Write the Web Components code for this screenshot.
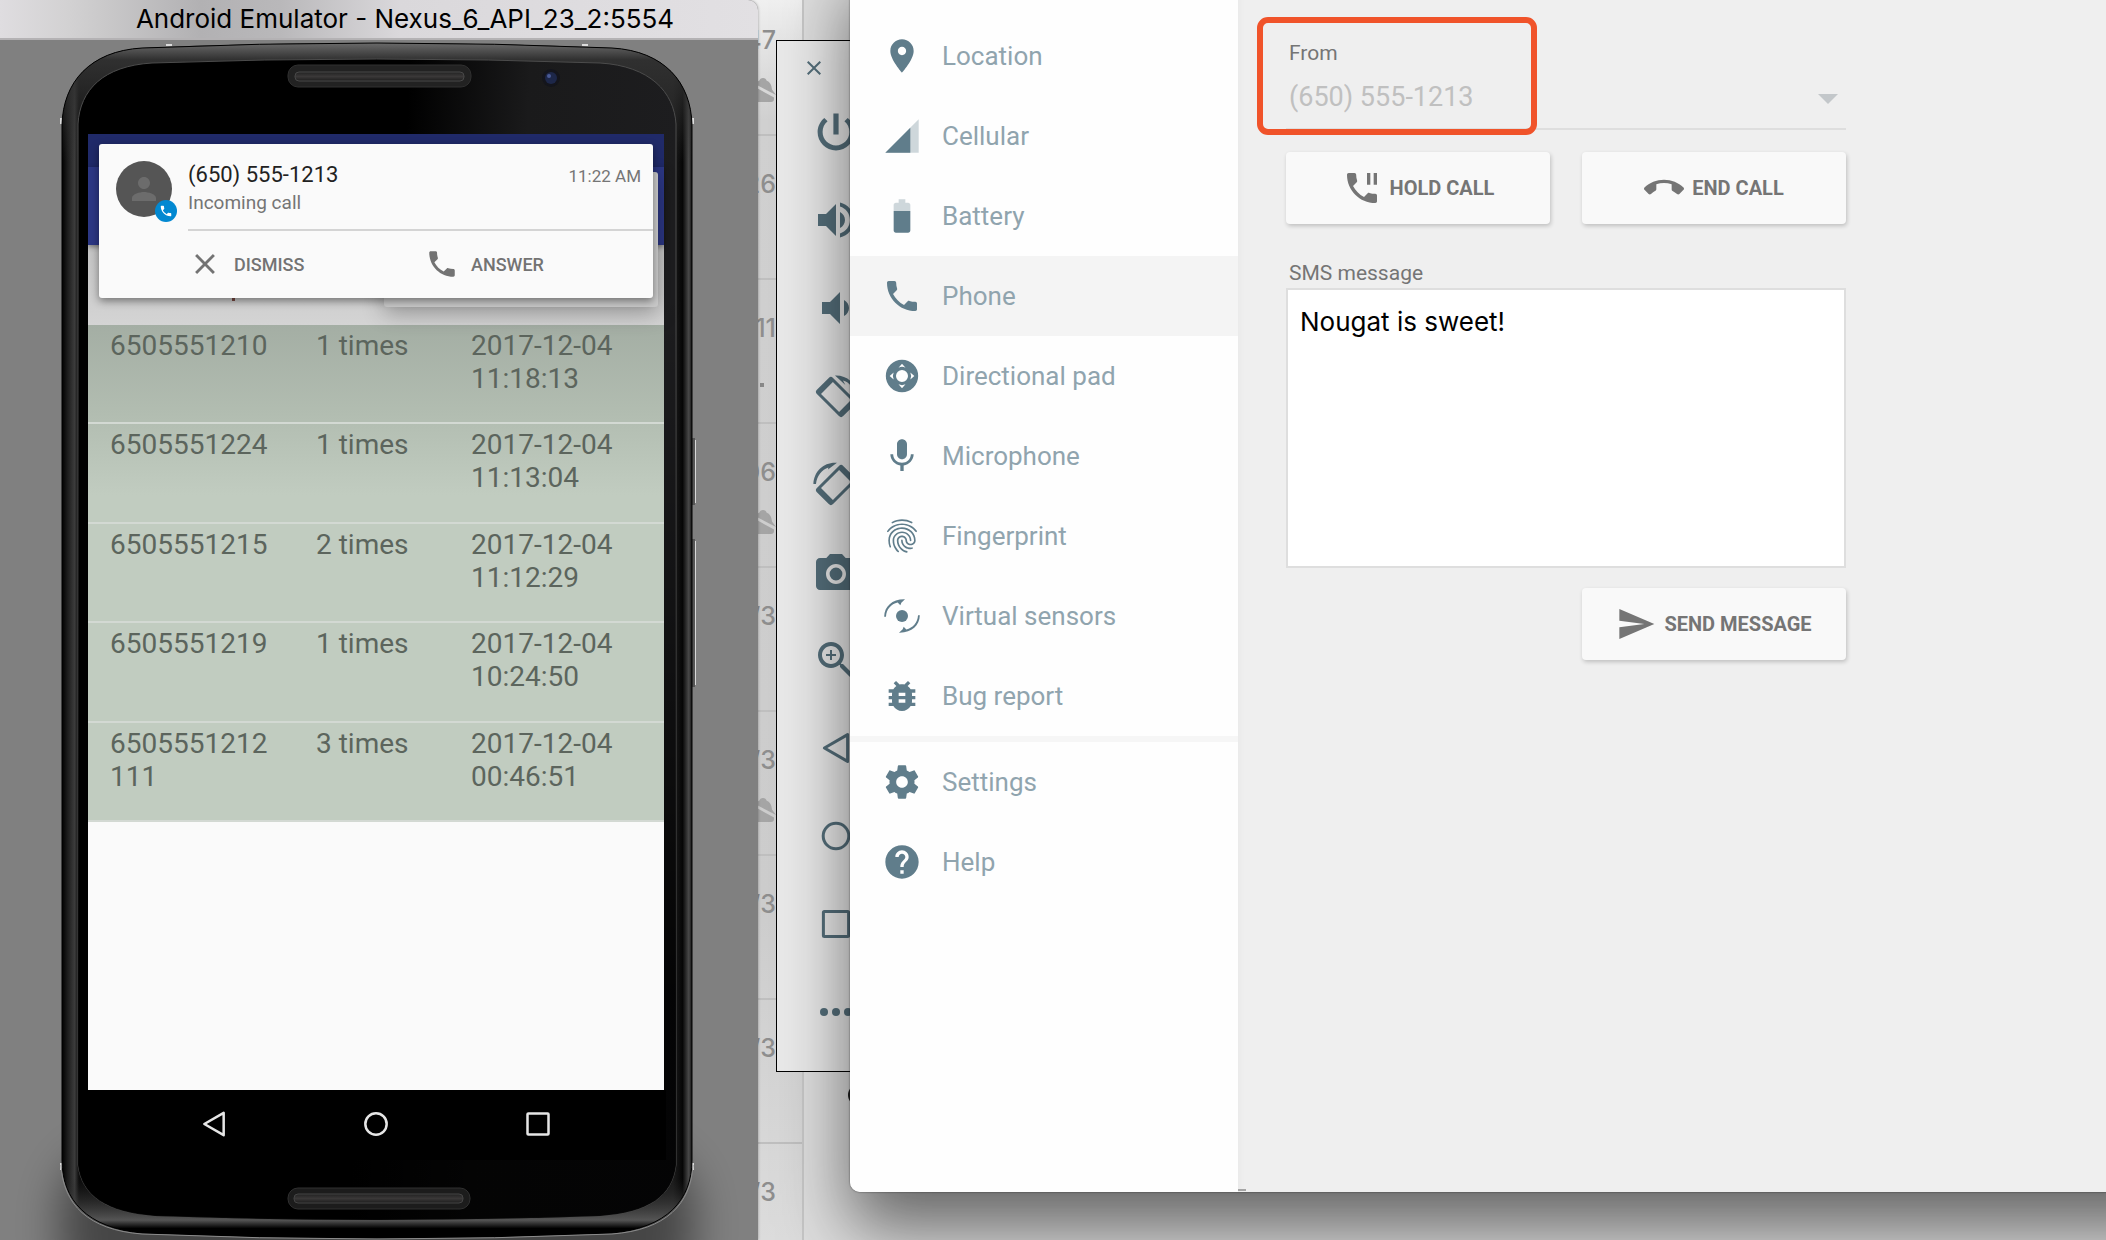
<!DOCTYPE html>
<html lang="en">
<head>
<meta charset="utf-8">
<title>Android Emulator</title>
<style>
html,body{margin:0;height:100%;overflow:hidden}
body{font-family:Roboto,"Noto Sans",sans-serif;background:#dadada}
</style>
</head>
<body>
<desktop-scene></desktop-scene>
<script>
const PHONE='<path d="M6.62 10.79c1.44 2.83 3.76 5.14 6.59 6.59l2.2-2.2c.27-.27.67-.36 1.02-.24 1.12.37 2.33.57 3.57.57.55 0 1 .45 1 1V20c0 .55-.45 1-1 1-9.39 0-17-7.61-17-17 0-.55.45-1 1-1h3.5c.55 0 1 .45 1 1 0 1.25.2 2.45.57 3.57.11.35.03.74-.25 1.02l-2.2 2.2z"/>';
const ICONS={
location:'<path d="M12 2C8.13 2 5 5.13 5 9c0 5.25 7 13 7 13s7-7.75 7-13c0-3.87-3.13-7-7-7zm0 9.5c-1.38 0-2.5-1.12-2.5-2.5s1.12-2.5 2.5-2.5 2.5 1.12 2.5 2.5-1.12 2.5-2.5 2.5z"/>',
cellular:'<path fill-opacity=".3" d="M2 22h20V2z"/><path d="M17 7L2 22h15z"/>',
battery:'<path fill-opacity=".3" d="M17 5.33C17 4.6 16.4 4 15.67 4H14V2h-4v2H8.33C7.6 4 7 4.6 7 5.33V9h10V5.33z"/><path d="M7 9v11.67C7 21.4 7.6 22 8.33 22h7.33c.74 0 1.34-.6 1.34-1.33V9H7z"/>',
phone:PHONE,
hold:PHONE+'<path d="M15 3h2v7h-2zM19 3h2v7h-2z"/>',
dpad:'<path fill-rule="evenodd" d="M12 2.3a9.7 9.7 0 1 0 0 19.4 9.7 9.7 0 0 0 0-19.4zM12 8.4a3.6 3.6 0 1 1 0 7.2 3.6 3.6 0 0 1 0-7.2zM12 4.6l2.1 2.4q-2.1-1-4.2 0zM12 19.4l2.1-2.4q-2.1 1-4.2 0zM4.6 12l2.4-2.1q-1 2.1 0 4.2zM19.4 12l-2.4-2.1q1 2.1 0 4.2z"/>',
mic:'<path d="M12 14c1.66 0 2.99-1.34 2.99-3L15 5c0-1.66-1.34-3-3-3S9 3.34 9 5v6c0 1.66 1.34 3 3 3zm5.3-3c0 3-2.54 5.1-5.3 5.1S6.7 14 6.7 11H5c0 3.41 2.72 6.23 6 6.72V21h2v-3.28c3.28-.48 6-3.3 6-6.72h-1.7z"/>',
fingerprint:'<path d="M17.81 4.47c-.08 0-.16-.02-.23-.06C15.66 3.42 14 3 12.01 3c-1.98 0-3.86.47-5.57 1.41-.24.13-.54.04-.68-.2-.13-.24-.04-.55.2-.68C7.82 2.52 9.86 2 12.01 2c2.13 0 3.99.47 6.03 1.52.25.13.34.43.21.67-.09.18-.26.28-.44.28zM3.5 9.72c-.1 0-.2-.03-.29-.09-.23-.16-.28-.47-.12-.7.99-1.4 2.25-2.5 3.75-3.27C9.98 4.04 14 4.03 17.15 5.65c1.5.77 2.76 1.86 3.75 3.25.16.22.11.54-.12.7-.23.16-.54.11-.7-.12-.9-1.26-2.04-2.25-3.39-2.94-2.87-1.47-6.54-1.47-9.4.01-1.36.7-2.5 1.7-3.4 2.96-.08.14-.23.21-.39.21zm6.25 12.07c-.13 0-.26-.05-.35-.15-.87-.87-1.34-1.43-2.01-2.64-.69-1.23-1.05-2.73-1.05-4.34 0-2.97 2.54-5.39 5.66-5.39s5.66 2.42 5.66 5.39c0 .28-.22.5-.5.5s-.5-.22-.5-.5c0-2.42-2.09-4.39-4.66-4.39-2.57 0-4.66 1.97-4.66 4.39 0 1.44.32 2.77.93 3.85.64 1.15 1.08 1.64 1.85 2.42.19.2.19.51 0 .71-.11.1-.24.15-.37.15zm7.17-1.85c-1.19 0-2.24-.3-3.1-.89-1.49-1.01-2.38-2.65-2.38-4.39 0-.28.22-.5.5-.5s.5.22.5.5c0 1.41.72 2.74 1.94 3.56.71.48 1.54.71 2.54.71.24 0 .64-.03 1.04-.1.27-.05.53.13.58.41.05.27-.13.53-.41.58-.57.11-1.07.12-1.21.12zM14.91 22c-.04 0-.09-.01-.13-.02-1.59-.44-2.63-1.03-3.72-2.1-1.4-1.39-2.17-3.24-2.17-5.22 0-1.62 1.38-2.94 3.08-2.94 1.7 0 3.08 1.32 3.08 2.94 0 1.07.93 1.94 2.08 1.94s2.08-.87 2.08-1.94c0-3.77-3.25-6.83-7.25-6.83-2.84 0-5.44 1.58-6.61 4.03-.39.81-.59 1.76-.59 2.8 0 .78.07 2.01.67 3.61.1.26-.03.55-.29.64-.26.1-.55-.04-.64-.29-.49-1.31-.73-2.61-.73-3.96 0-1.2.23-2.29.68-3.24 1.33-2.79 4.28-4.6 7.51-4.6 4.55 0 8.25 3.51 8.25 7.83 0 1.62-1.38 2.94-3.08 2.94s-3.08-1.32-3.08-2.94c0-1.07-.93-1.94-2.08-1.94s-2.08.87-2.08 1.94c0 1.71.66 3.31 1.87 4.51.95.94 1.86 1.46 3.27 1.85.27.07.42.35.35.61-.05.23-.26.38-.47.38z"/>',
sensors:'<circle cx="12" cy="12" r="3.6"/><path d="M1.3 12.4C1.5 6.2 6.2 1.8 13.8 2L11.6 4.1 11 5.6 9.4 3.9C5.4 4.8 2.6 8 2.4 12.4zM22.7 11.6C22.5 17.8 17.8 22.2 10.2 22L12.4 19.9 13 18.4 14.6 20.1C18.6 19.2 21.4 16 21.6 11.6z"/>',
bug:'<path d="M20 8h-2.81c-.45-.78-1.07-1.45-1.82-1.96L17 4.41 15.59 3l-2.17 2.17C12.96 5.06 12.49 5 12 5c-.49 0-.96.06-1.41.17L8.41 3 7 4.41l1.62 1.63C7.88 6.55 7.26 7.22 6.81 8H4v2h2.09c-.05.33-.09.66-.09 1v1H4v2h2v1c0 .34.04.67.09 1H4v2h2.81c1.04 1.79 2.97 3 5.19 3s4.15-1.21 5.19-3H20v-2h-2.09c.05-.33.09-.66.09-1v-1h2v-2h-2v-1c0-.34-.04-.67-.09-1H20V8zm-6 8h-4v-2h4v2zm0-4h-4v-2h4v2z"/>',
settings:'<path d="M19.43 12.98c.04-.32.07-.64.07-.98s-.03-.66-.07-.98l2.11-1.65c.19-.15.24-.42.12-.64l-2-3.46c-.12-.22-.39-.3-.61-.22l-2.49 1c-.52-.4-1.08-.73-1.69-.98l-.38-2.65C14.46 2.18 14.25 2 14 2h-4c-.25 0-.46.18-.49.42l-.38 2.65c-.61.25-1.17.59-1.69.98l-2.49-1c-.23-.09-.49 0-.61.22l-2 3.46c-.13.22-.07.49.12.64l2.11 1.65c-.04.32-.07.65-.07.98s.03.66.07.98l-2.11 1.65c-.19.15-.24.42-.12.64l2 3.46c.12.22.39.3.61.22l2.49-1c.52.4 1.08.73 1.69.98l.38 2.65c.03.24.24.42.49.42h4c.25 0 .46-.18.49-.42l.38-2.65c.61-.25 1.17-.59 1.69-.98l2.49 1c.23.09.49 0 .61-.22l2-3.46c.12-.22.07-.49-.12-.64l-2.11-1.65zM12 15.5c-1.93 0-3.5-1.57-3.5-3.5s1.57-3.5 3.5-3.5 3.5 1.57 3.5 3.5-1.57 3.5-3.5 3.5z"/>',
help:'<path d="M12 2C6.48 2 2 6.48 2 12s4.48 10 10 10 10-4.48 10-10S17.52 2 12 2zm1 17h-2v-2h2v2zm2.07-7.75l-.9.92C13.45 12.9 13 13.5 13 15h-2v-.5c0-1.1.45-2.1 1.17-2.83l1.24-1.26c.37-.36.59-.86.59-1.41 0-1.1-.9-2-2-2s-2 .9-2 2H8c0-2.21 1.79-4 4-4s4 1.79 4 4c0 .88-.36 1.68-.93 2.25z"/>',
end:'<path d="M12 9c-1.6 0-3.15.25-4.6.72v3.1c0 .39-.23.74-.56.9-.98.49-1.87 1.12-2.66 1.85-.18.18-.43.28-.7.28-.28 0-.53-.11-.71-.29L.29 13.08c-.18-.17-.29-.42-.29-.7 0-.28.11-.53.29-.71C3.34 8.78 7.46 7 12 7s8.66 1.78 11.71 4.67c.18.18.29.43.29.71 0 .28-.11.53-.29.71l-2.48 2.48c-.18.18-.43.29-.71.29-.27 0-.52-.11-.7-.28-.79-.74-1.69-1.36-2.67-1.85-.33-.16-.56-.5-.56-.9v-3.1C15.15 9.25 13.6 9 12 9z"/>',
send:'<path d="M2.01 21L23 12 2.01 3 2 10l15 2-15 2z"/>',
close:'<path d="M19 6.41L17.59 5 12 10.59 6.41 5 5 6.41 10.59 12 5 17.59 6.41 19 12 13.41 17.59 19 19 17.59 13.41 12z"/>',
power:'<path d="M13.3 2.8h-2.6v10.4h2.6zM17.83 4.97l-1.62 1.62C17.89 7.86 18.7 9.81 18.7 12c0 3.7-3 6.7-6.7 6.7S5.3 15.7 5.3 12c0-2.19.81-4.14 2.48-5.42L6.17 4.97C4.13 6.62 2.8 9.26 2.8 12c0 5.08 4.12 9.2 9.2 9.2s9.2-4.12 9.2-9.2c0-2.74-1.33-5.38-3.37-7.03z"/>',
volup:'<path d="M3 9v6h4l5 5V4L7 9H3zm13.5 3c0-1.77-1.02-3.29-2.5-4.03v8.05c1.48-.73 2.5-2.25 2.5-4.02zM14 3.23v2.06c2.89.86 5 3.54 5 6.71s-2.11 5.85-5 6.71v2.06c4.01-.91 7-4.49 7-8.77s-2.99-7.86-7-8.77z"/>',
voldown:'<path d="M18.5 12c0-1.77-1.02-3.29-2.5-4.03v8.05c1.48-.73 2.5-2.25 2.5-4.02zM5 9v6h4l5 5V4L9 9H5z"/>',
rotleft:'<g transform="rotate(45 12 12.5)"><path fill-rule="evenodd" d="M4.2 6.8h15.6q1.5 0 1.5 1.5v8.4q0 1.5-1.5 1.5H4.2q-1.5 0-1.5-1.5V8.3q0-1.5 1.5-1.5zM5.6 8.3v8.4h12.8V8.3z"/></g><path d="M11.5 1.7C17.5 1.5 22 5.5 22.8 11.5h-1.4C20.7 7.5 18.5 5 15.5 4.2l1.2 2.3z"/>',
rotright:'<g transform="rotate(-45 12 12.5)"><path fill-rule="evenodd" d="M4.2 6.8h15.6q1.5 0 1.5 1.5v8.4q0 1.5-1.5 1.5H4.2q-1.5 0-1.5-1.5V8.3q0-1.5 1.5-1.5zM5.6 8.3v8.4h12.8V8.3z"/></g><path d="M12.5 1.4C6 .9 1 5.5.7 12h1.3C2.4 7.8 5 4.800 8.200 3.700L8 4.800z"/>',
camera:'<path d="M9 3L7.17 5H4c-1.1 0-2 .9-2 2v12c0 1.1.9 2 2 2h16c1.1 0 2-.9 2-2V7c0-1.1-.9-2-2-2h-3.17L15 3H9zm3 15c-2.76 0-5-2.24-5-5s2.24-5 5-5 5 2.24 5 5-2.24 5-5 5zM12 9.8a3.2 3.2 0 1 0 0 6.4 3.2 3.2 0 0 0 0-6.4z"/>',
zoom:'<path d="M15.5 14h-.79l-.28-.27C15.41 12.59 16 11.11 16 9.5 16 5.91 13.09 3 9.5 3S3 5.91 3 9.5 5.91 16 9.5 16c1.61 0 3.09-.59 4.23-1.57l.27.28v.79l5 4.99L20.49 19l-4.99-5zm-6 0C7.01 14 5 11.99 5 9.5S7.01 5 9.5 5 14 7.01 14 9.5 11.99 14 9.5 14zm.5-7H9v2H7v1h2v2h1v-2h2V9h-2z"/>',
back:'<path d="M6.2 12l11.6-6.7v13.4z" fill="none" stroke="currentColor" stroke-width="1.5" stroke-linejoin="round"/>',
home:'<circle cx="12" cy="12" r="6.4" fill="none" stroke="currentColor" stroke-width="1.5"/>',
recent:'<rect x="5.7" y="5.7" width="12.6" height="12.6" rx=".5" fill="none" stroke="currentColor" stroke-width="1.5"/>',
more:'<circle cx="6" cy="12" r="2"/><circle cx="12" cy="12" r="2"/><circle cx="18" cy="12" r="2"/>',
person:'<path d="M12 12c2.21 0 4-1.79 4-4s-1.79-4-4-4-4 1.79-4 4 1.79 4 4 4zm0 2c-2.67 0-8 1.34-8 4v2h16v-2c0-2.66-5.33-4-8-4z"/>',
bell:'<path d="M11 0q3 0 3.5 2.500q5 2 5.500 9l4 5.500L3 6q2-3 4.500-3.500Q8 0 11 0zM2 8.500l20 11v1.500q0 3-3 3H2z"/>'
};
function define(tag,markup){
  customElements.define(tag,class extends HTMLElement{
    constructor(){super();this.attachShadow({mode:'open'})}
    connectedCallback(){this.shadowRoot.innerHTML=typeof markup==='function'?markup(this):markup}
  });
}
define('ui-icon',el=>{const s=el.getAttribute('size')||40;return `<style>:host{display:block;flex:none;width:${s}px;height:${s}px}svg{display:block;width:100%;height:100%}</style><svg viewBox="0 0 24 24" fill="currentColor" aria-hidden="true">${ICONS[el.getAttribute('name')]}</svg>`});

/* Calendar behind the windows */
define('calendar-strip',()=>{
  const rows=[['47',1],['26'],['11',2],['06',1],['/3'],['/3',1],['/3'],['/3'],['/3']];
  return `<style>
  :host{display:flex;flex-direction:column;box-sizing:border-box;width:804px;border-right:2px solid #c6c6c6;font:500 25px/24px Inter,sans-serif;color:#8e8e8e;overflow:hidden;background:linear-gradient(#f0f0f0,#d0d0d0 120px,#cccccc 900px,#dcdcdc)}
  div{box-sizing:border-box;height:144px;flex:none;border-bottom:2px solid #bfbfbf;padding:36px 26px 0 0;display:flex;flex-direction:column;align-items:flex-end}
  div:first-of-type{height:136px;padding-top:28px}
  ui-icon{margin-top:26px;color:#a5a5a5}
  i{width:4px;height:4px;background:#888;margin:43px 12px 0}
  </style>`+rows.map(r=>`<div>${r[0]}${r[1]===1?'<ui-icon name="bell" size="24"></ui-icon>':r[1]===2?'<i></i>':''}</div>`).join('')});

define('call-notification',`<style>
:host{display:grid;grid-template-columns:89px 1fr;background:#fafafa;border-radius:3px;box-shadow:0 3px 8px rgba(0,0,0,.45);height:154px}
.av{position:relative;width:56px;height:56px;border-radius:50%;background:#555;color:#6c6c6c;display:flex;align-items:center;justify-content:center;margin:17px 0 0 17px}
.badge{position:absolute;left:39px;top:39px;width:22px;height:22px;border-radius:50%;background:#0288d1;color:#fff;display:flex;align-items:center;justify-content:center}
.body{display:flex;flex-direction:column}
.top{display:flex;justify-content:space-between;align-items:baseline;padding:17px 12px 0 0;line-height:28px;font-size:22px;color:#212121}
time{font-size:17px;color:#757575}
.sub{font-size:19px;line-height:24px;color:#757575;height:39px;padding-top:1px;box-sizing:border-box}
.acts{border-top:2px solid #d4d4d4;display:grid;grid-template-columns:237px 1fr;height:69px}
button{all:unset;display:flex;align-items:center;gap:12px;padding-bottom:3px;font-size:18px;font-weight:500;color:#737373;cursor:pointer}
</style><div class="av"><ui-icon name="person" size="36"></ui-icon><span class="badge"><ui-icon name="phone" size="14"></ui-icon></span></div>
<div class="body"><div class="top"><span>(650) 555-1213</span><time>11:22 AM</time></div><div class="sub">Incoming call</div>
<div class="acts"><button><ui-icon name="close" size="34"></ui-icon>DISMISS</button><button><ui-icon name="phone" size="34"></ui-icon>ANSWER</button></div></div>`);

define('call-log',()=>{
  const rows=[['6505551210','1','2017-12-04 11:18:13'],['6505551224','1','2017-12-04 11:13:04'],['6505551215','2','2017-12-04 11:12:29'],['6505551219','1','2017-12-04 10:24:50'],['6505551212111','3','2017-12-04 00:46:51']];
  return `<style>
  :host{display:block}
  table{width:100%;height:497px;table-layout:fixed;border-collapse:separate;border-spacing:0;font-size:28px;line-height:33px;color:#5c655d;background:linear-gradient(#a4aea4,#b2bdb1 90px,#c1ccc0 170px)}
  td{vertical-align:top;padding:4px 20px 0 0;border-bottom:2px solid #d3d9d3}
  td:first-child{width:170px;padding:4px 36px 0 22px;word-break:break-all}
  td:nth-child(2){width:135px}
  </style><table>${rows.map(r=>`<tr><td>${r[0]}</td><td>${r[1]} times</td><td>${r[2]}</td></tr>`).join('')}</table>`});

define('phone-screen',`<style>
:host{display:flex;flex-direction:column;position:relative;background:#fafafa;height:956px}
.status{height:33px;background:#202a69}
.appbar{height:78px;background:#2c3784;box-shadow:0 2px 5px rgba(0,0,0,.4);z-index:1}
.head{height:80px;background:linear-gradient(#c4c4c4,#d4d4d4)}
.toast{position:absolute;z-index:2;left:296px;top:38px;width:274px;height:135px;background:#c9c9c9;border-radius:3px;box-shadow:0 6px 22px rgba(0,0,0,.3)}
.mark{position:absolute;z-index:2;left:144px;top:158px;width:3px;height:9px;background:#7b4a42}
call-notification{position:absolute;z-index:3;left:11px;top:10px;width:554px}
</style><div class="status"></div><div class="appbar"></div><div class="head"></div><call-log></call-log>
<div class="toast"></div><div class="mark"></div><call-notification></call-notification>`);

define('phone-body',`<style>
:host{display:block;position:relative;flex:1;background:#808080;overflow:hidden}
.art{position:absolute;left:0;top:0}
.in{position:relative;margin:94px 94px 0 88px}
nav{display:flex;justify-content:space-between;padding:14px 106px 0 106px;color:#e6e6e6}
button{all:unset;display:block}
</style>
<svg class="art" width="758" height="1200" viewBox="0 40 758 1200" aria-hidden="true">
<defs>
<linearGradient id="b" x1="0" y1="0" x2="1" y2="0"><stop offset="0" stop-color="#000"/><stop offset=".008" stop-color="#1a1a1a"/><stop offset=".02" stop-color="#3c3c3c"/><stop offset=".027" stop-color="#0c0c0c"/><stop offset=".97" stop-color="#1c1c1c"/><stop offset=".985" stop-color="#060606"/><stop offset=".995" stop-color="#4a4a4a"/><stop offset="1" stop-color="#111"/></linearGradient>
<linearGradient id="t" x1="0" y1="0" x2="0" y2="1"><stop offset="0" stop-color="#6a6a6a"/><stop offset=".014" stop-color="#303030"/><stop offset=".1" stop-color="#303030" stop-opacity="0"/><stop offset=".95" stop-color="#222" stop-opacity="0"/><stop offset=".985" stop-color="#555"/><stop offset=".992" stop-color="#000"/></linearGradient>
<linearGradient id="f" x1="0" y1="0" x2="1" y2=".1"><stop offset="0" stop-color="#000"/><stop offset=".55" stop-color="#000"/><stop offset=".75" stop-color="#1a1a1b"/><stop offset="1" stop-color="#1d1d1f"/></linearGradient>
<linearGradient id="fb" x1="0" y1="0" x2="0" y2="1"><stop offset=".2" stop-color="#000" stop-opacity="0"/><stop offset=".8" stop-color="#000" stop-opacity=".85"/></linearGradient>
<linearGradient id="s" x1="0" y1="0" x2="0" y2="1"><stop offset="0" stop-color="#222"/><stop offset=".5" stop-color="#3a3838"/><stop offset="1" stop-color="#1d1d1d"/></linearGradient>
<filter id="bl" x="-30%" y="-30%" width="160%" height="160%"><feGaussianBlur stdDeviation="22"/></filter>
</defs>
<rect x="60" y="1150" width="634" height="150" rx="60" fill="#000" opacity=".45" filter="url(#bl)"/>
<path d="M166 45h6M582 45h6M61 118v6M693 118v6M61 1163v7M693 1163v7" stroke="#ddd" stroke-width="2"/>
<path d="M695 440v63M695 541v144" stroke="#d8d8d8" stroke-width="2" fill="none"/><path d="M692 438h3v67h-3zM692 539h3v148h-3z" fill="#555"/>
<path d="M62 125C63 82 90 51 142 48Q377 38 612 48C664 51 691 82 692 125V1160C692 1200 667 1228 612 1233Q377 1243 142 1233C87 1228 62 1200 62 1160z" fill="url(#b)"/>
<path d="M62 125C63 82 90 51 142 48Q377 38 612 48C664 51 691 82 692 125V1160C692 1200 667 1228 612 1233Q377 1243 142 1233C87 1228 62 1200 62 1160z" fill="url(#t)" stroke="#000" stroke-width="1"/>
<path d="M61 1165C63 1204 88 1230 142 1234Q377 1244 612 1234C666 1230 691 1204 693 1165" fill="none" stroke="#8c8c8c" stroke-width="1"/>
<path d="M78 124C80 90 103 66 152 63Q377 55 600 63C650 66 674 92 676 124V1165C672 1196 650 1212 600 1216Q377 1224 155 1216C106 1212 82 1196 78 1165z" fill="url(#f)" stroke="#4c4c4c" stroke-width="1"/>
<path d="M78 124C80 90 103 66 152 63Q377 55 600 63C650 66 674 92 676 124V1165C672 1196 650 1212 600 1216Q377 1224 155 1216C106 1212 82 1196 78 1165z" fill="url(#fb)"/>
<rect x="88" y="1090" width="578" height="70" fill="#000"/>
<rect x="288" y="65" width="183" height="22" rx="10" fill="#222" stroke="#303030"/><rect x="295" y="72" width="169" height="9" rx="4" fill="url(#s)" stroke="#484848"/>
<rect x="288" y="1188" width="182" height="21" rx="10" fill="#1c1c1c" stroke="#303030"/><rect x="294" y="1194" width="169" height="9" rx="4" fill="url(#s)" stroke="#444"/>
<circle cx="551" cy="78" r="9" fill="#14151c"/><circle cx="551" cy="78" r="6" fill="#1d2749"/><circle cx="549" cy="76" r="2" fill="#4a5a96"/>
</svg>
<div class="in"><phone-screen></phone-screen><nav><button aria-label="Back"><ui-icon name="back" size="40"></ui-icon></button><button aria-label="Home"><ui-icon name="home" size="40"></ui-icon></button><button aria-label="Overview"><ui-icon name="recent" size="40"></ui-icon></button></nav></div>`);

define('emulator-window',`<style>
:host{display:flex;flex-direction:column;background:#808080;border-radius:0 10px 0 0;overflow:hidden;box-shadow:0 0 3px rgba(0,0,0,.35)}
header{height:38px;border-bottom:2px solid #b4b2b4;font:26px/38px Inter,sans-serif;color:#000;text-align:center;padding-left:52px;white-space:nowrap;background:linear-gradient(90deg,#dfdde0,#d2d1d2 70px,#b2b1b3 200px,#b9b8ba 280px,#dad8db 400px,#e2e0e3)}
</style><header>Android Emulator - Nexus_6_API_23_2:5554</header><phone-body></phone-body>`);

define('emulator-toolbar',()=>{
  const n=[['power','Power'],['volup','Volume up'],['voldown','Volume down'],['rotleft','Rotate left'],['rotright','Rotate right'],['camera','Screenshot'],['zoom','Zoom'],['back','Back'],['home','Home'],['recent','Overview'],['more','More']];
  return `<style>
  :host{display:flex;flex-direction:column;box-sizing:border-box;border:1px solid #000;background:#e9e9e9;color:#546e7a;padding-left:35px}
  button{all:unset;display:block}
  .x{margin:15px 0 15px -10px}
  .t{height:48px;margin:13px 0 27px}
  </style><button class="x" aria-label="Close"><ui-icon name="close" size="24"></ui-icon></button>`+n.map(i=>`<button class="t" aria-label="${i[1]}"><ui-icon name="${i[0]}" size="48"></ui-icon></button>`).join('')});

define('menu-item',el=>`<style>
:host{display:block}
a{display:flex;align-items:center;gap:20px;height:80px;padding-left:32px;color:#90a4ae;font-size:26px;line-height:32px;text-decoration:none}
:host([selected]) a{background:#f4f4f4}
ui-icon{color:#607d8b}
</style><a href="#"><ui-icon name="${el.getAttribute('icon')}"></ui-icon><slot></slot></a>`);

define('side-menu',`<style>
:host{display:block;width:388px;flex:none;background:#fefefe;padding-top:56px}
hr{margin:0;border:0;height:6px;background:#f6f6f6}
</style>
<menu-item icon="location">Location</menu-item><menu-item icon="cellular">Cellular</menu-item><menu-item icon="battery">Battery</menu-item><menu-item icon="phone" selected>Phone</menu-item><menu-item icon="dpad">Directional pad</menu-item><menu-item icon="mic">Microphone</menu-item><menu-item icon="fingerprint">Fingerprint</menu-item><menu-item icon="sensors">Virtual sensors</menu-item><menu-item icon="bug">Bug report</menu-item><hr><menu-item icon="settings">Settings</menu-item><menu-item icon="help">Help</menu-item>`);

define('raised-button',el=>`<style>
:host{display:block;width:264px}
button{all:unset;box-sizing:border-box;width:100%;height:72px;display:flex;align-items:center;justify-content:center;gap:8px;background:#f9f9f9;border-radius:4px;box-shadow:1px 2px 4px rgba(0,0,0,.2);font-size:20px;font-weight:700;color:#757575;cursor:pointer}
</style><button><ui-icon name="${el.getAttribute('icon')}"></ui-icon><slot></slot></button>`);

define('phone-panel',`<style>
:host{display:block;flex:1;background:#efefef;box-shadow:inset 10px 0 10px -10px rgba(0,0,0,.04);padding:81px 48px 0;position:relative}
form{max-width:560px;display:flex;flex-direction:column}
label{font-size:21px;line-height:24px;color:#757575;padding-left:3px}
.sel{position:relative;margin-bottom:22px}
.sel::after{content:"";position:absolute;right:8px;top:29px;border:10px solid transparent;border-top-color:#c3c7ca;border-bottom:0}
select{appearance:none;display:block;width:100%;height:65px;border:0;border-bottom:2px solid #dedede;background:none;font:27px/32px Roboto,sans-serif;color:#c0c0c0;padding:0 0 0 3px;margin:0;opacity:1;border-radius:0}
.row{display:flex;justify-content:space-between;margin-bottom:37px}
textarea{display:block;box-sizing:border-box;width:100%;height:280px;margin:3px 0 20px;border:2px solid #dedede;background:#fff;padding:16px 12px;font:26px/32px Inter,sans-serif;color:#000;resize:none;border-radius:0;outline:0}
.send{align-self:flex-end}
.hl{position:absolute;left:19px;top:57px;width:280px;height:118px;box-sizing:border-box;border:6px solid #f0532a;border-radius:11px;pointer-events:none}
.grip{position:absolute;left:0;bottom:1px;width:8px;height:2px;background:#a5a5a5}
</style><form><label for="from">From</label><div class="sel"><select id="from" disabled><option>(650) 555-1213</option></select></div>
<div class="row"><raised-button icon="hold">HOLD CALL</raised-button><raised-button icon="end">END CALL</raised-button></div>
<label for="sms">SMS message</label><textarea id="sms" spellcheck="false">Nougat is sweet!</textarea>
<raised-button class="send" icon="send">SEND MESSAGE</raised-button></form><div class="hl"></div><div class="grip"></div>`);

define('controls-window',`<style>
:host{display:flex;border-radius:0 0 0 10px;box-shadow:0 0 2px rgba(0,0,0,.6),0 36px 68px rgba(0,0,0,.55)}
side-menu{border-radius:0 0 0 10px}
</style><side-menu></side-menu><phone-panel></phone-panel>`);

/* The controls window runs past the top and right edges of the desktop */
define('desktop-scene',`<style>
:host{display:block;position:relative;height:100vh;overflow:hidden;background:#dedede}
calendar-strip,emulator-window,emulator-toolbar,controls-window,.dot{position:absolute}
calendar-strip{left:0;top:0;bottom:0}
emulator-window{left:0;top:0;width:758px;bottom:0}
emulator-toolbar{left:776px;top:40px;width:120px;height:1032px}
.dot{left:848px;top:1084px;width:22px;height:22px;border-radius:50%;background:#222}
controls-window{left:850px;right:-80px;top:-40px;bottom:48px}
</style><calendar-strip></calendar-strip><emulator-window></emulator-window><emulator-toolbar></emulator-toolbar><div class="dot"></div><controls-window></controls-window>`);
</script>
</body>
</html>
